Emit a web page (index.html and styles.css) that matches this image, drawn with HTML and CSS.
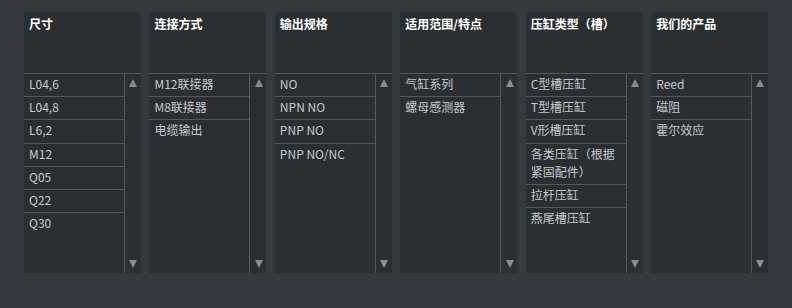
FILE: index.html
```html
<!DOCTYPE html>
<html lang="zh-CN">
<head>
    <meta charset="UTF-8">
    <meta name="viewport" content="width=device-width, initial-scale=1.0">
    <title>传感器选型</title>
    <link rel="stylesheet" href="styles.css">
</head>
<body>

    <div class="filters">
        <div class="panel">
            <div class="panel-title">尺寸</div>
            <div class="panel-body">
                <ul class="options">
                    <li>L04,6</li>
                    <li>L04,8</li>
                    <li>L6,2</li>
                    <li>M12</li>
                    <li>Q05</li>
                    <li>Q22</li>
                    <li>Q30</li>
                </ul>
                <div class="scrollbar"><span class="arrow up"></span><span class="arrow down"></span></div>
            </div>
        </div>

        <div class="panel">
            <div class="panel-title">连接方式</div>
            <div class="panel-body">
                <ul class="options">
                    <li>M12联接器</li>
                    <li>M8联接器</li>
                    <li>电缆输出</li>
                </ul>
                <div class="scrollbar"><span class="arrow up"></span><span class="arrow down"></span></div>
            </div>
        </div>

        <div class="panel">
            <div class="panel-title">输出规格</div>
            <div class="panel-body">
                <ul class="options">
                    <li>NO</li>
                    <li>NPN NO</li>
                    <li>PNP NO</li>
                    <li>PNP NO/NC</li>
                </ul>
                <div class="scrollbar"><span class="arrow up"></span><span class="arrow down"></span></div>
            </div>
        </div>

        <div class="panel">
            <div class="panel-title">适用范围/特点</div>
            <div class="panel-body">
                <ul class="options">
                    <li>气缸系列</li>
                    <li>螺母感测器</li>
                </ul>
                <div class="scrollbar"><span class="arrow up"></span><span class="arrow down"></span></div>
            </div>
        </div>

        <div class="panel">
            <div class="panel-title">压缸类型（槽）</div>
            <div class="panel-body">
                <ul class="options">
                    <li>C型槽压缸</li>
                    <li>T型槽压缸</li>
                    <li>V形槽压缸</li>
                    <li>各类压缸（根据紧固配件）</li>
                    <li>拉杆压缸</li>
                    <li>燕尾槽压缸</li>
                </ul>
                <div class="scrollbar"><span class="arrow up"></span><span class="arrow down"></span></div>
            </div>
        </div>

        <div class="panel">
            <div class="panel-title">我们的产品</div>
            <div class="panel-body">
                <ul class="options">
                    <li>Reed</li>
                    <li>磁阻</li>
                    <li>霍尔效应</li>
                </ul>
                <div class="scrollbar"><span class="arrow up"></span><span class="arrow down"></span></div>
            </div>
        </div>
    </div>

</body>
</html>
```

FILE: styles.css
```css
body {
    font-family: "Noto Sans CJK SC", "Noto Sans", sans-serif;
    background-color: #36393e;
    margin: 0;
    padding: 0;
}

.filters {
    display: grid;
    grid-template-columns: repeat(6, 1fr);
    column-gap: 8.6px;
    padding: 12px 24px 0 24px;
}

.panel {
    background-color: #2c2f32;
    border-radius: 4px 4px 0 0;
    height: 261px;
    display: flex;
    flex-direction: column;
}

.panel-title {
    height: 62px;
    box-sizing: border-box;
    padding: 3px 5px 0 5px;
    border-bottom: 1px solid #55585c;
    color: #fff;
    font-size: 12px;
    font-weight: bold;
    line-height: 18px;
}

.panel-body {
    flex: 1;
    display: flex;
}

.options {
    flex: 1;
    list-style: none;
    margin: 0;
    padding: 0;
    border-right: 1px solid #55585c;
}

.options li {
    padding: 1px 5px 3px 5px;
    font-size: 12px;
    line-height: 18.2px;
    color: #c4c8cc;
    border-bottom: 1px solid #55585c;
}

.options li:last-child {
    border-bottom: none;
}

.scrollbar {
    width: 15px;
    display: flex;
    flex-direction: column;
    justify-content: space-between;
    align-items: center;
    padding: 5px 0 5px 1px;
}

.arrow {
    width: 0;
    height: 0;
    border-left: 4.5px solid transparent;
    border-right: 4.5px solid transparent;
}

.arrow.up {
    border-bottom: 8px solid #8b8d90;
}

.arrow.down {
    border-top: 8px solid #8b8d90;
}
```
